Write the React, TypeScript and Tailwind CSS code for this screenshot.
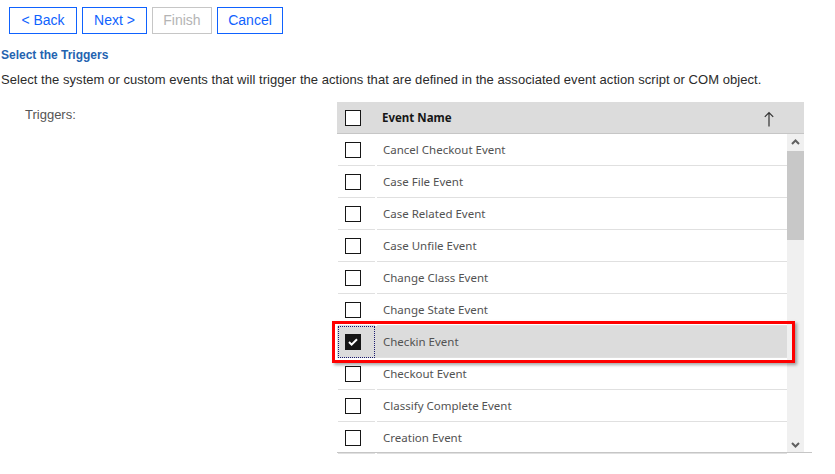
const events = [
	"Cancel Checkout Event",
	"Case File Event",
	"Case Related Event",
	"Case Unfile Event",
	"Change Class Event",
	"Change State Event",
	"Checkin Event",
	"Checkout Event",
	"Classify Complete Event",
	"Creation Event",
];

const Box = ({ checked }: { checked?: boolean }) =>
	checked ? (
		<div className="w-4 h-4 bg-[#161616] flex items-center justify-center">
			<svg width="10" height="8" viewBox="0 0 10 8">
				<path d="M1 4l2.6 2.6L9 1.2" stroke="#fff" strokeWidth="2" fill="none" />
			</svg>
		</div>
	) : (
		<div className="w-4 h-4 border border-[#161616] bg-white" />
	);

const WizardButton = ({ label, width, disabled }: { label: string; width: string; disabled?: boolean }) => (
	<button
		className={`${width} h-[27px] text-[14px] bg-white border ${
			disabled ? "border-[#c6c6c6] text-[#b4b4b4]" : "border-[#0f62fe] text-[#0f62fe]"
		}`}
	>
		{label}
	</button>
);

export default function App() {
	return (
		<div className="w-[835px] h-[474px] bg-white overflow-hidden font-['Liberation_Sans',Arial,sans-serif]">
			<div className="flex gap-[5px] pl-[9px] pt-[7px]">
				<WizardButton label="< Back" width="w-[68px]" />
				<WizardButton label="Next >" width="w-[65px]" />
				<WizardButton label="Finish" width="w-[60px]" disabled />
				<WizardButton label="Cancel" width="w-[66px]" />
			</div>
			<div className="pl-[1px] mt-[14px] text-[12px] font-bold text-[#2463b0] leading-[14px]">
				Select the Triggers
			</div>
			<div className="pl-[1px] mt-[10px] text-[13px] tracking-[0.05px] text-[#2b2b2b] leading-[16px]">
				Select the system or custom events that will trigger the actions that are defined in the associated event action script or COM object.
			</div>
			<div className="flex mt-[14px]">
				<div className="w-[337px] pl-[25px] pt-[3px] text-[13px] text-[#555]">Triggers:</div>
				<div className="w-[475px] relative font-['Noto_Sans',sans-serif]">
					<div className="w-[467px] h-[32px] bg-[#dcdcdc] border-b border-[#c6c6c6] flex items-center">
						<div className="w-[38px] pl-[8px]">
							<Box />
						</div>
						<div className="flex-1 pl-[7px] text-[11.5px] font-bold text-[#161616]">Event Name</div>
						<svg width="10" height="16" viewBox="0 0 10 16" className="mr-[30px] mt-[3px]">
							<path d="M5 1.5V15.5M0.8 5.8L5 1.5L9.2 5.8" stroke="#333" strokeWidth="1.2" fill="none" />
						</svg>
					</div>
					<div className="flex h-[319px] border-b border-[#c6c6c6]">
						<div className="w-[450px]">
							{events.map((e) => {
								const sel = e === "Checkin Event";
								return (
									<div
										key={e}
										className={`flex h-[32px] items-center ${sel ? "bg-[#dcdcdc]" : ""}`}
									>
										<div className="w-[37px] h-full flex items-center border-b border-[#e0e0e0] ml-[1px]">
											{sel ? (
												<div className="w-[38px] h-[32px] border border-dotted border-[#1a1a6e] flex items-center pl-[6px]">
													<Box checked />
												</div>
											) : (
												<div className="pl-[7px]">
													<Box />
												</div>
											)}
										</div>
										<div className="flex-1 h-full flex items-center ml-[2px] pl-[6px] text-[11.5px] text-[#525252] border-b border-[#e0e0e0]">
											{e}
										</div>
									</div>
								);
							})}
						</div>
						<div className="w-[17px] bg-[#f0f0f0] flex flex-col items-center">
							<svg width="9" height="6" viewBox="0 0 9 6" className="mt-[5px]">
								<path d="M1 5l3.5-3.5L8 5" stroke="#606060" strokeWidth="2" fill="none" />
							</svg>
							<div className="w-[17px] h-[89px] bg-[#c8c8c8] mt-[6px]" />
							<div className="flex-1" />
							<svg width="9" height="6" viewBox="0 0 9 6" className="mb-[4px]">
								<path d="M1 1l3.5 3.5L8 1" stroke="#606060" strokeWidth="2" fill="none" />
							</svg>
						</div>
					</div>
					<div className="absolute left-[-5px] top-[219px] w-[463px] h-[42px] border-[3px] border-[#ff0000] shadow-[2px_2px_3px_rgba(0,0,0,0.35)]" />
				</div>
			</div>
		</div>
	);
}
